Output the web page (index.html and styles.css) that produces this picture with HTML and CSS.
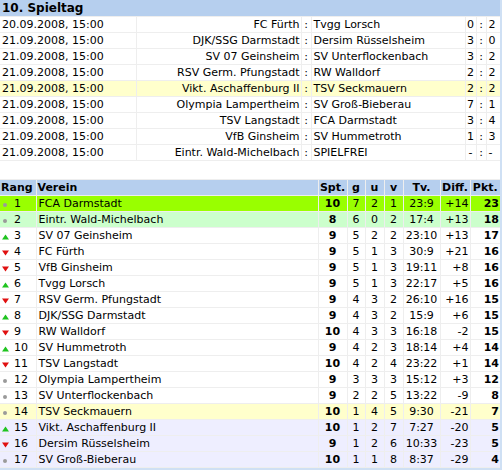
FILE: index.html
```html
<!DOCTYPE html>
<html lang="de">
<head>
<meta charset="utf-8">
<title>10. Spieltag</title>
<link rel="stylesheet" href="styles.css">
</head>
<body>
<div class="page">
<table class="games">
  <colgroup>
    <col class="c-date"><col class="c-home"><col class="c-sep"><col class="c-away"><col class="c-gh"><col class="c-gs"><col class="c-ga">
  </colgroup>
  <tr class="title"><td colspan="7">10. Spieltag</td></tr>
  <tr><td class="date">20.09.2008, 15:00</td><td class="home">FC Fürth</td><td class="sep">:</td><td class="away">Tvgg Lorsch</td><td class="gh">0</td><td class="gs">:</td><td class="ga">2</td></tr>
  <tr><td class="date">21.09.2008, 15:00</td><td class="home">DJK/SSG Darmstadt</td><td class="sep">:</td><td class="away">Dersim Rüsselsheim</td><td class="gh">3</td><td class="gs">:</td><td class="ga">0</td></tr>
  <tr><td class="date">21.09.2008, 15:00</td><td class="home">SV 07 Geinsheim</td><td class="sep">:</td><td class="away">SV Unterflockenbach</td><td class="gh">3</td><td class="gs">:</td><td class="ga">2</td></tr>
  <tr><td class="date">21.09.2008, 15:00</td><td class="home">RSV Germ. Pfungstadt</td><td class="sep">:</td><td class="away">RW Walldorf</td><td class="gh">2</td><td class="gs">:</td><td class="ga">2</td></tr>
  <tr class="own"><td class="date">21.09.2008, 15:00</td><td class="home">Vikt. Aschaffenburg II</td><td class="sep">:</td><td class="away">TSV Seckmauern</td><td class="gh">2</td><td class="gs">:</td><td class="ga">2</td></tr>
  <tr><td class="date">21.09.2008, 15:00</td><td class="home">Olympia Lampertheim</td><td class="sep">:</td><td class="away">SV Groß-Bieberau</td><td class="gh">7</td><td class="gs">:</td><td class="ga">1</td></tr>
  <tr><td class="date">21.09.2008, 15:00</td><td class="home">TSV Langstadt</td><td class="sep">:</td><td class="away">FCA Darmstadt</td><td class="gh">3</td><td class="gs">:</td><td class="ga">4</td></tr>
  <tr><td class="date">21.09.2008, 15:00</td><td class="home">VfB Ginsheim</td><td class="sep">:</td><td class="away">SV Hummetroth</td><td class="gh">1</td><td class="gs">:</td><td class="ga">3</td></tr>
  <tr><td class="date">21.09.2008, 15:00</td><td class="home">Eintr. Wald-Michelbach</td><td class="sep">:</td><td class="away">SPIELFREI</td><td class="gh">-</td><td class="gs">:</td><td class="ga">-</td></tr>
</table>

<div class="spacer"></div>

<table class="standings">
  <colgroup>
    <col class="c-rang"><col class="c-verein"><col class="c-spt"><col class="c-g"><col class="c-u"><col class="c-v"><col class="c-tv"><col class="c-diff"><col class="c-pkt">
  </colgroup>
  <tr class="head"><td>Rang</td><td>Verein</td><td class="ctr">Spt.</td><td class="ctr">g</td><td class="ctr">u</td><td class="ctr">v</td><td class="ctr">Tv.</td><td class="ctr">Diff.</td><td class="ctr">Pkt.</td></tr>
  <tr class="r-champ"><td class="rang"><svg class="ico" viewBox="0 0 7 7"><circle cx="3" cy="4" r="2" fill="#9a9a9a"/></svg>1</td><td>FCA Darmstadt</td><td class="spt">10</td><td class="num">7</td><td class="num">2</td><td class="num">1</td><td class="num">23:9</td><td class="diff">+14</td><td class="pkt">23</td></tr>
  <tr class="r-up"><td class="rang"><svg class="ico" viewBox="0 0 7 7"><circle cx="3" cy="4" r="2" fill="#9a9a9a"/></svg>2</td><td>Eintr. Wald-Michelbach</td><td class="spt">8</td><td class="num">6</td><td class="num">0</td><td class="num">2</td><td class="num">17:4</td><td class="diff">+13</td><td class="pkt">18</td></tr>
  <tr><td class="rang"><svg class="ico" viewBox="0 0 7 7"><path d="M3.5 1.5 L7 6.5 L0 6.5 Z" fill="#1fc41f"/></svg>3</td><td>SV 07 Geinsheim</td><td class="spt">9</td><td class="num">5</td><td class="num">2</td><td class="num">2</td><td class="num">23:10</td><td class="diff">+13</td><td class="pkt">17</td></tr>
  <tr><td class="rang"><svg class="ico" viewBox="0 0 7 7"><path d="M0 1.5 L7 1.5 L3.5 6.5 Z" fill="#e01010"/></svg>4</td><td>FC Fürth</td><td class="spt">9</td><td class="num">5</td><td class="num">1</td><td class="num">3</td><td class="num">30:9</td><td class="diff">+21</td><td class="pkt">16</td></tr>
  <tr><td class="rang"><svg class="ico" viewBox="0 0 7 7"><path d="M0 1.5 L7 1.5 L3.5 6.5 Z" fill="#e01010"/></svg>5</td><td>VfB Ginsheim</td><td class="spt">9</td><td class="num">5</td><td class="num">1</td><td class="num">3</td><td class="num">19:11</td><td class="diff">+8</td><td class="pkt">16</td></tr>
  <tr><td class="rang"><svg class="ico" viewBox="0 0 7 7"><path d="M3.5 1.5 L7 6.5 L0 6.5 Z" fill="#1fc41f"/></svg>6</td><td>Tvgg Lorsch</td><td class="spt">9</td><td class="num">5</td><td class="num">1</td><td class="num">3</td><td class="num">22:17</td><td class="diff">+5</td><td class="pkt">16</td></tr>
  <tr><td class="rang"><svg class="ico" viewBox="0 0 7 7"><path d="M0 1.5 L7 1.5 L3.5 6.5 Z" fill="#e01010"/></svg>7</td><td>RSV Germ. Pfungstadt</td><td class="spt">9</td><td class="num">4</td><td class="num">3</td><td class="num">2</td><td class="num">26:10</td><td class="diff">+16</td><td class="pkt">15</td></tr>
  <tr><td class="rang"><svg class="ico" viewBox="0 0 7 7"><path d="M3.5 1.5 L7 6.5 L0 6.5 Z" fill="#1fc41f"/></svg>8</td><td>DJK/SSG Darmstadt</td><td class="spt">9</td><td class="num">4</td><td class="num">3</td><td class="num">2</td><td class="num">15:9</td><td class="diff">+6</td><td class="pkt">15</td></tr>
  <tr><td class="rang"><svg class="ico" viewBox="0 0 7 7"><path d="M0 1.5 L7 1.5 L3.5 6.5 Z" fill="#e01010"/></svg>9</td><td>RW Walldorf</td><td class="spt">10</td><td class="num">4</td><td class="num">3</td><td class="num">3</td><td class="num">16:18</td><td class="diff">-2</td><td class="pkt">15</td></tr>
  <tr><td class="rang"><svg class="ico" viewBox="0 0 7 7"><path d="M3.5 1.5 L7 6.5 L0 6.5 Z" fill="#1fc41f"/></svg>10</td><td>SV Hummetroth</td><td class="spt">9</td><td class="num">4</td><td class="num">2</td><td class="num">3</td><td class="num">18:14</td><td class="diff">+4</td><td class="pkt">14</td></tr>
  <tr><td class="rang"><svg class="ico" viewBox="0 0 7 7"><path d="M0 1.5 L7 1.5 L3.5 6.5 Z" fill="#e01010"/></svg>11</td><td>TSV Langstadt</td><td class="spt">10</td><td class="num">4</td><td class="num">2</td><td class="num">4</td><td class="num">23:22</td><td class="diff">+1</td><td class="pkt">14</td></tr>
  <tr><td class="rang"><svg class="ico" viewBox="0 0 7 7"><circle cx="3" cy="4" r="2" fill="#9a9a9a"/></svg>12</td><td>Olympia Lampertheim</td><td class="spt">9</td><td class="num">3</td><td class="num">3</td><td class="num">3</td><td class="num">15:12</td><td class="diff">+3</td><td class="pkt">12</td></tr>
  <tr><td class="rang"><svg class="ico" viewBox="0 0 7 7"><circle cx="3" cy="4" r="2" fill="#9a9a9a"/></svg>13</td><td>SV Unterflockenbach</td><td class="spt">9</td><td class="num">2</td><td class="num">2</td><td class="num">5</td><td class="num">13:22</td><td class="diff">-9</td><td class="pkt">8</td></tr>
  <tr class="own"><td class="rang"><svg class="ico" viewBox="0 0 7 7"><circle cx="3" cy="4" r="2" fill="#9a9a9a"/></svg>14</td><td>TSV Seckmauern</td><td class="spt">10</td><td class="num">1</td><td class="num">4</td><td class="num">5</td><td class="num">9:30</td><td class="diff">-21</td><td class="pkt">7</td></tr>
  <tr class="r-down"><td class="rang"><svg class="ico" viewBox="0 0 7 7"><path d="M3.5 1.5 L7 6.5 L0 6.5 Z" fill="#1fc41f"/></svg>15</td><td>Vikt. Aschaffenburg II</td><td class="spt">10</td><td class="num">1</td><td class="num">2</td><td class="num">7</td><td class="num">7:27</td><td class="diff">-20</td><td class="pkt">5</td></tr>
  <tr class="r-down"><td class="rang"><svg class="ico" viewBox="0 0 7 7"><path d="M0 1.5 L7 1.5 L3.5 6.5 Z" fill="#e01010"/></svg>16</td><td>Dersim Rüsselsheim</td><td class="spt">9</td><td class="num">1</td><td class="num">2</td><td class="num">6</td><td class="num">10:33</td><td class="diff">-23</td><td class="pkt">5</td></tr>
  <tr class="r-down"><td class="rang"><svg class="ico" viewBox="0 0 7 7"><circle cx="3" cy="4" r="2" fill="#9a9a9a"/></svg>17</td><td>SV Groß-Bieberau</td><td class="spt">10</td><td class="num">1</td><td class="num">1</td><td class="num">8</td><td class="num">8:37</td><td class="diff">-29</td><td class="pkt">4</td></tr>
</table>
</div>
</body>
</html>
```

FILE: styles.css
```css
html, body {
  margin: 0;
  padding: 0;
}
body {
  background: #cfe0f4;
  font-family: "DejaVu Sans", Verdana, sans-serif;
  font-size: 11px;
  color: #000;
}
.page {
  width: 500px;
  background: #fff;
}
table {
  width: 500px;
  border-collapse: collapse;
  table-layout: fixed;
}
td {
  height: 15px;
  line-height: 15px;
  padding: 0;
  white-space: nowrap;
  overflow: hidden;
  border-bottom: 1px solid #eeeeee;
  border-right: 1px solid #eeeeee;
}
td:last-child { border-right: none; }

/* games table */
.c-date { width: 136px; }
.c-home { width: 165px; }
.c-sep  { width: 10px; }
.c-away { width: 154px; }
.c-gh   { width: 11px; }
.c-gs   { width: 10px; }
.c-ga   { width: 14px; }

.games .title td {
  background: #b6cfee;
  font-weight: bold;
  font-size: 12px;
  height: 16px;
  line-height: 16px;
  padding-left: 2px;
}
.games .date { padding-left: 2px; }
.games .home { text-align: right; padding-right: 1px; }
.games .sep { text-align: center; }
.games .away { padding-left: 2px; }
.games .gh { text-align: center; }
.games .gs { text-align: center; }
.games .ga { padding-left: 2px; }
.games .own td { background: #ffffcc; }

.spacer {
  height: 18px;
  border-bottom: 1px solid #eeeeee;
}

/* standings */
.c-rang   { width: 36px; }
.c-verein { width: 282px; }
.c-spt    { width: 29px; }
.c-g      { width: 18px; }
.c-u      { width: 19px; }
.c-v      { width: 19px; }
.c-tv     { width: 37px; }
.c-diff   { width: 30px; }
.c-pkt    { width: 30px; }

.standings .head td {
  background: #b6cfee;
  font-weight: bold;
  font-size: 11px;
  padding-left: 1px;
}
.standings .head td.ctr { text-align: center; padding-left: 0; }
.standings td { padding-left: 2px; }
.standings td.rang { padding-left: 2px; }
.ico {
  width: 7px;
  height: 7px;
  margin-right: 5px;
  vertical-align: -1px;
}
.standings td.spt { text-align: center; font-weight: bold; padding-left: 0; }
.standings td.num { text-align: center; padding-left: 0; }
.standings td.diff { text-align: right; padding: 0 1px 0 0; }
.standings td.pkt { text-align: right; font-weight: bold; padding: 0 1px 0 0; }

.standings .r-champ td { background: #99ff00; }
.standings .r-up td { background: #ccffcc; }
.standings .own td { background: #ffffcc; }
.standings .r-down td { background: #eeeeff; }
```
